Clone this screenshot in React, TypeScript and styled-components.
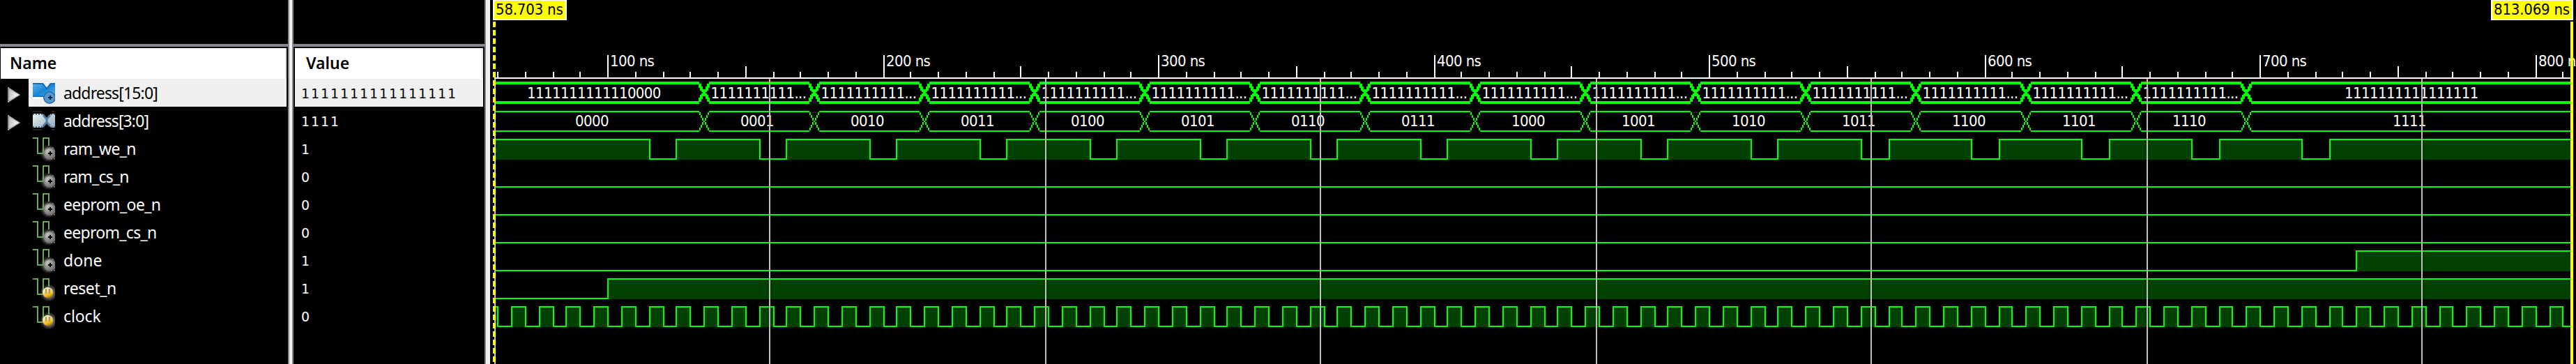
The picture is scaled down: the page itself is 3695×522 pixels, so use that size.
import React from "react";
import styled, { createGlobalStyle } from "styled-components";

const GlobalStyle = createGlobalStyle`
  html, body { margin: 0; padding: 0; background: #000; }
  body { width: 3695px; height: 522px; overflow: hidden; }
`;

const UI_FONT = `"Noto Sans", "Open Sans", sans-serif`;
const WAVE_FONT = `"DejaVu Sans Condensed", "DejaVu Sans", sans-serif`;
const GREEN = "#00ff00";
const FILL = "#004000";

/* ---------- time scale ---------- */
const ORIGIN = 703;
const WIDTH = 2992;
const T_START = 58.703;
const T_END = 813.069;
const px = (t: number) => 1 + 2 * Math.floor(1620.64 + 1.9751 * (t - 700));
const X0 = px(T_START) + 2;
const X1 = px(T_END);

/* ---------- layout ---------- */
const Viewer = styled.div`
  display: flex;
  width: 3695px;
  height: 522px;
  background: #000;
  overflow: hidden;
`;

const Column = styled.section<{ $width: number }>`
  display: flex;
  flex-direction: column;
  flex: none;
  width: ${(p) => p.$width}px;
  height: 522px;
`;

const Splitter = styled.div<{ $bar: number; $closed?: boolean }>`
  flex: none;
  box-sizing: content-box;
  width: ${(p) => p.$bar}px;
  height: 522px;
  background: #f0f0f0;
  border-left: 2px solid #858992;
  border-right: ${(p) => (p.$closed ? "2px solid #858992" : "none")};
`;

const ColumnTop = styled.div`
  height: 63px;
  margin-bottom: 2px;
  border-bottom: 4px solid #858992;
`;

const HeaderCell = styled.div<{ $left: number; $pad: number }>`
  height: 44px;
  box-sizing: border-box;
  margin: 0 2px 0 ${(p) => p.$left}px;
  padding-left: ${(p) => p.$pad}px;
  background: #fff;
  border-right: 2px solid #e5e5e5;
  color: #000;
  font: 600 23px/43px ${UI_FONT};
  letter-spacing: 0;
`;

const NameRow = styled.div`
  display: flex;
  height: 40px;
  margin-right: 2px;
`;

const Expander = styled.div`
  flex: none;
  width: 41px;
  height: 40px;
`;

const NameCell = styled.div<{ $selected?: boolean }>`
  display: flex;
  flex: 1;
  padding-left: 6px;
  gap: 12px;
  background: ${(p) => (p.$selected ? "#f0f0f0" : "transparent")};
  color: ${(p) => (p.$selected ? "#000" : "#fff")};
`;

const SignalName = styled.span<{ $spacing: number }>`
  font: 400 23px/40px ${UI_FONT};
  letter-spacing: ${(p) => p.$spacing}px;
  white-space: nowrap;
`;

const ValueRow = styled.div<{ $selected?: boolean }>`
  height: 40px;
  box-sizing: border-box;
  margin: 0 2px;
  padding-left: 9px;
  background: ${(p) => (p.$selected ? "#f0f0f0" : "transparent")};
  color: ${(p) => (p.$selected ? "#000" : "#fff")};
  font: 19px/42px "DejaVu Sans", sans-serif;
  letter-spacing: 1.91px;
`;

const WavePanel = styled.section`
  position: relative;
  display: flex;
  flex-direction: column;
  flex: none;
  width: ${WIDTH}px;
  height: 522px;
`;

const Drawing = styled.svg`
  display: block;
  flex: none;
`;

const WaveText = styled.text`
  font: 22px ${WAVE_FONT};
  letter-spacing: -0.6px;
  fill: #fff;
  white-space: pre;
`;

const GridLayer = styled.svg`
  position: absolute;
  left: 0;
  top: 0;
`;

const CursorLabel = styled.div<{ $left: number; $width: number }>`
  position: absolute;
  left: ${(p) => p.$left}px;
  top: -1px;
  box-sizing: border-box;
  width: ${(p) => p.$width}px;
  height: 30px;
  padding-left: 2px;
  border: 2px solid #fff;
  background: #ff0;
  color: #000;
  font: 22px/26px ${WAVE_FONT};
  letter-spacing: -0.2px;
  white-space: nowrap;
`;

/* ---------- signals ---------- */
type IconKind = "busOut" | "bus" | "output" | "input";
type Wave =
  | { type: "bus"; thick?: boolean; labels: string[] }
  | { type: "bit"; start: 0 | 1; edges: number[] };
interface Signal {
  name: string;
  spacing: number;
  value: string;
  icon: IconKind;
  selected?: boolean;
  wave: Wave;
}

const BUS_CHANGES = Array.from({ length: 15 }, (_, i) => 135 + 40 * i);
const COUNT = Array.from({ length: 16 }, (_, i) => i.toString(2).padStart(4, "0"));
const WIDE = COUNT.map((_, i) =>
  i === 0 ? "1111111111110000" : i === 15 ? "1111111111111111" : "1111111111..."
);
const WE_EDGES = Array.from({ length: 16 }, (_, i) => [115 + 40 * i, 125 + 40 * i]).flat();
const CLOCK_EDGES = Array.from({ length: 151 }, (_, i) => 60 + 5 * i);

const SIGNALS: Signal[] = [
  { name: "address[15:0]", spacing: -0.85, value: "1111111111111111", icon: "busOut", selected: true, wave: { type: "bus", thick: true, labels: WIDE } },
  { name: "address[3:0]", spacing: -0.9, value: "1111", icon: "bus", wave: { type: "bus", labels: COUNT } },
  { name: "ram_we_n", spacing: -0.65, value: "1", icon: "output", wave: { type: "bit", start: 1, edges: WE_EDGES } },
  { name: "ram_cs_n", spacing: -0.8, value: "0", icon: "output", wave: { type: "bit", start: 0, edges: [] } },
  { name: "eeprom_oe_n", spacing: -0.6, value: "0", icon: "output", wave: { type: "bit", start: 0, edges: [] } },
  { name: "eeprom_cs_n", spacing: -0.7, value: "0", icon: "output", wave: { type: "bit", start: 0, edges: [] } },
  { name: "done", spacing: 0.1, value: "1", icon: "output", wave: { type: "bit", start: 0, edges: [735] } },
  { name: "reset_n", spacing: -0.4, value: "1", icon: "input", wave: { type: "bit", start: 0, edges: [100] } },
  { name: "clock", spacing: -0.1, value: "0", icon: "input", wave: { type: "bit", start: 1, edges: CLOCK_EDGES } },
];

/* ---------- icons ---------- */
const DefsHolder = styled.svg`
  position: absolute;
`;

const IconDefs = () => (
  <DefsHolder width="0" height="0">
    <defs>
      <linearGradient id="blue" x1="0" y1="0" x2="1" y2="1">
        <stop offset="0" stopColor="#62b4f0" />
        <stop offset="0.5" stopColor="#1a84d4" />
        <stop offset="1" stopColor="#5fb2ee" />
      </linearGradient>
      <linearGradient id="silver" x1="0" y1="0" x2="1" y2="1">
        <stop offset="0" stopColor="#eef3f5" />
        <stop offset="1" stopColor="#8fa9b8" />
      </linearGradient>
      <linearGradient id="arrow" x1="0" y1="0" x2="1" y2="0.3">
        <stop offset="0" stopColor="#b4b4b8" />
        <stop offset="1" stopColor="#fff" />
      </linearGradient>
      <radialGradient id="glow">
        <stop offset="0.45" stopColor="#9a9a9a" />
        <stop offset="0.75" stopColor="#5a5a5a" stopOpacity="0.8" />
        <stop offset="1" stopColor="#303030" stopOpacity="0" />
      </radialGradient>
      <radialGradient id="knob" cx="0.35" cy="0.3" r="0.8">
        <stop offset="0" stopColor="#c4c4c4" />
        <stop offset="1" stopColor="#666" />
      </radialGradient>
      <linearGradient id="gold" x1="0.2" y1="0" x2="0.6" y2="1">
        <stop offset="0" stopColor="#fffdf0" />
        <stop offset="0.45" stopColor="#f7d774" />
        <stop offset="0.75" stopColor="#fcb814" />
        <stop offset="1" stopColor="#b47a08" />
      </linearGradient>
    </defs>
  </DefsHolder>
);

const SignalIcon = ({ kind }: { kind: IconKind }) => {
  if (kind === "busOut")
    return (
      <Drawing width="32" height="40" viewBox="0 0 32 40">
        <path d="M0 6H15L20 13L25 6H32V26H0Z" fill="url(#blue)" />
        <path d="M0 7H14L20 14L26 7H32" fill="none" stroke="#146fbe" strokeWidth="2" />
        <path d="M0 25H15" stroke="#0d79cc" strokeWidth="2" />
        <path d="M0 27H16V29H0Z" fill="#fff" />
        <circle cx="24" cy="27" r="8.2" fill="#5795c8" stroke="#296ba6" strokeWidth="1.6" />
        <path d="M25 24V30M22 27H28" stroke="#06294d" strokeWidth="2" />
      </Drawing>
    );
  if (kind === "bus")
    return (
      <Drawing width="32" height="40" viewBox="0 0 32 40">
        <path d="M0 7H13M27 7H32M0 33H13M27 33H32" stroke="#222" strokeWidth="2" />
        <path d="M0 10H14L19 16V24L14 30H0ZM32 10H26L21 16V24L26 30H32Z" fill="url(#silver)" />
        <path d="M15 12L20 18L25 12M15 28L20 22L25 28M20 16V24" fill="none" stroke="#527ca3" strokeWidth="3" />
        <path d="M0 11H14M26 11H32M0 29H14M26 29H32" stroke="#4d7596" strokeWidth="2" strokeDasharray="2 2" />
      </Drawing>
    );
  const input = kind === "input";
  const d = input ? 2 : 0;
  return (
    <Drawing width="32" height="40" viewBox="0 0 32 40">
      <circle cx="23" cy="27" r="13" fill="url(#glow)" opacity={input ? 0.8 : 0.7} />
      <path
        transform={`translate(0 ${d})`}
        d="M0 5H7V27H15V5H23V16"
        fill="none"
        stroke="#6ba851"
        strokeWidth="2"
      />
      {input ? (
        <>
          <circle cx="21.5" cy="26.5" r="7.5" fill="url(#gold)" />
          <path d="M19 21V28M24 21V28" stroke="#a89a68" strokeWidth="2" />
        </>
      ) : (
        <>
          <circle cx="24" cy="27" r="8" fill="url(#knob)" stroke="#777" strokeWidth="1.5" />
          <path d="M25 24V30M22 27H28" stroke="#000" strokeWidth="2" />
          <path d="M26 35H32M31 31V35M28 19H32" stroke="#777" strokeWidth="1.5" strokeDasharray="2 2" />
        </>
      )}
    </Drawing>
  );
};

const ExpandArrow = () => (
  <Drawing width="41" height="40" viewBox="0 0 41 40">
    <path d="M12 13V33L28 23Z" fill="url(#arrow)" stroke="#a2a2a6" strokeWidth="1.4" />
    <path d="M12 12V34" stroke="#8d8d92" strokeWidth="2" />
  </Drawing>
);

/* ---------- waveforms ---------- */
const BitWave = ({ start, edges }: { start: 0 | 1; edges: number[] }) => {
  const xs = edges.map(px).filter((x) => x > X0 - 2 && x < X1);
  const stops = [X0, ...xs, X1];
  return (
    <g>
      {stops.slice(0, -1).map((x, i) => {
        const high = (i + start) % 2 === 1;
        const w = stops[i + 1] - x;
        return (
          <g key={x}>
            {high && <rect x={x} y={8} width={w} height={28} fill={FILL} />}
            <rect x={x} y={high ? 6 : 34} width={w} height={2} fill={GREEN} />
          </g>
        );
      })}
      {xs.map((x) => (
        <rect key={x} x={x} y={6} width={2} height={30} fill={GREEN} />
      ))}
    </g>
  );
};

/* A bus value change: two mirrored staircases meeting in the middle. */
const Crossing = ({ x, thick }: { x: number; thick?: boolean }) => {
  const steps = thick ? [4, 4, 2, 4, 2, 4, 4] : [4, 4, 4, 2, 4, 4, 4];
  const w = thick ? 4 : 2;
  const grow = thick ? 1 : 0;
  let y = 8;
  return (
    <g>
      {steps.map((h, i) => {
        const top = y - grow;
        y += h;
        const height = h + grow * 2;
        return (
          <g key={i}>
            <rect x={x - 6 + 2 * i - grow} y={top} width={w} height={height} fill={GREEN} />
            <rect x={x + 6 - 2 * i - grow} y={top} width={w} height={height} fill={GREEN} />
          </g>
        );
      })}
    </g>
  );
};

const BusWave = ({ thick, labels }: { thick?: boolean; labels: string[] }) => {
  const xs = BUS_CHANGES.map(px);
  return (
    <g>
      {labels.map((label, i) => {
        const from = i === 0 ? X0 : xs[i - 1] + 8;
        const to = i === labels.length - 1 ? X1 : xs[i] - 6;
        const h = thick ? 4 : 2;
        const center = i === 0 ? 852 : i === labels.length - 1 ? 3459 : (from + to) / 2;
        const half = label.length === 4 ? 27 : label.length === 13 ? 69.5 : 96;
        return (
          <g key={i}>
            <rect x={from} y={thick ? 4 : 6} width={to - from} height={h} fill={GREEN} />
            <rect x={from} y={thick ? 32 : 34} width={to - from} height={h} fill={GREEN} />
            <WaveText x={center - half} y={28}>
              {label}
            </WaveText>
          </g>
        );
      })}
      {xs.map((x) => (
        <Crossing key={x} x={x} thick={thick} />
      ))}
    </g>
  );
};

const Ruler = () => {
  const ticks = Array.from({ length: 76 }, (_, i) => 60 + 10 * i);
  return (
    <Drawing width={WIDTH} height={113} viewBox={`${ORIGIN} 0 ${WIDTH} 113`}>
      <rect x={X0 - 2} y={111} width={X1 - X0 + 2} height={2} fill="#fff" />
      {ticks.map((t) => {
        const h = t % 100 === 0 ? 32 : t % 50 === 0 ? 16 : 8;
        return <rect key={t} x={px(t)} y={111 - h} width={2} height={h} fill="#fff" />;
      })}
      {ticks
        .filter((t) => t % 100 === 0)
        .map((t) => (
          <WaveText key={t} x={px(t) + 4} y={95}>
            {`${t} ns`}
          </WaveText>
        ))}
    </Drawing>
  );
};

const Overlay = () => (
  <GridLayer width={WIDTH} height={522} viewBox={`${ORIGIN} 0 ${WIDTH} 522`}>
    {Array.from({ length: 8 }, (_, i) => (
      <rect key={i} x={px(T_START + 100 * i)} y={113} width={2} height={409} fill="#c0c0c0" />
    ))}
    <path d="M709 31V522" stroke="#ff0" strokeWidth="4" strokeDasharray="8 4" />
    <rect x={X1} y={31} width={4} height={491} fill="#ff0" />
  </GridLayer>
);

export default function App() {
  return (
    <>
      <GlobalStyle />
      <IconDefs />
      <Viewer>
        <Column $width={413}>
          <ColumnTop />
          <HeaderCell $left={1} $pad={13}>Name</HeaderCell>
          {SIGNALS.map((s) => (
            <NameRow key={s.name}>
              <Expander>{s.wave.type === "bus" && <ExpandArrow />}</Expander>
              <NameCell $selected={s.selected}>
                <SignalIcon kind={s.icon} />
                <SignalName $spacing={s.spacing}>{s.name}</SignalName>
              </NameCell>
            </NameRow>
          ))}
        </Column>
        <Splitter $bar={4} $closed />
        <Column $width={274}>
          <ColumnTop />
          <HeaderCell $left={2} $pad={16}>Value</HeaderCell>
          {SIGNALS.map((s) => (
            <ValueRow key={s.name} $selected={s.selected}>{s.value}</ValueRow>
          ))}
        </Column>
        <Splitter $bar={6} />
        <WavePanel>
          <Ruler />
          {SIGNALS.map((s) => (
            <Drawing key={s.name} width={WIDTH} height={40} viewBox={`${ORIGIN} 0 ${WIDTH} 40`}>
              {s.wave.type === "bus" ? <BusWave {...s.wave} /> : <BitWave {...s.wave} />}
            </Drawing>
          ))}
          <Overlay />
          <CursorLabel $left={4} $width={106}>58.703 ns</CursorLabel>
          <CursorLabel $left={2870} $width={118}>813.069 ns</CursorLabel>
        </WavePanel>
      </Viewer>
    </>
  );
}
